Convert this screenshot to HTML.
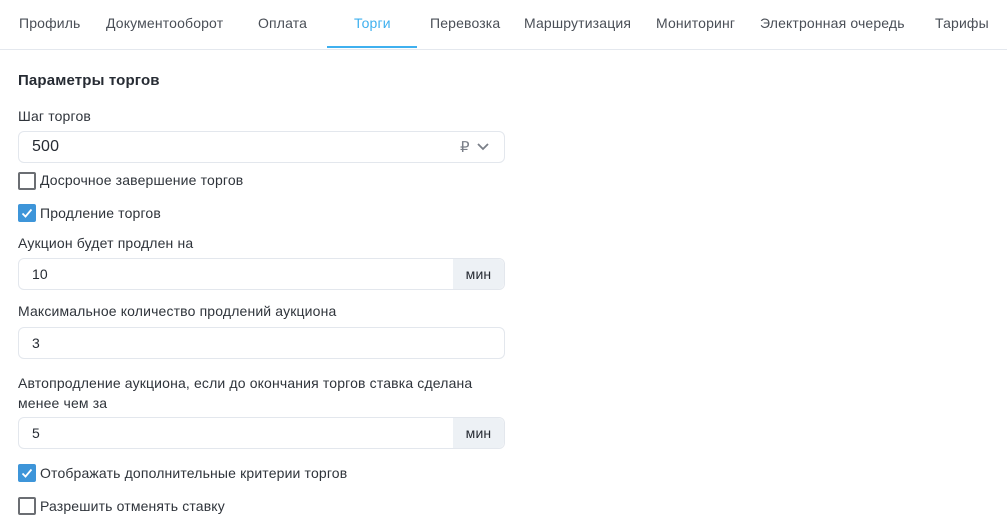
<!DOCTYPE html><html><head><meta charset="utf-8"><style>
body{margin:0;width:1007px;height:532px;background:#fff;font-family:"Liberation Sans",sans-serif;color:#262b33;position:relative;overflow:hidden;letter-spacing:0.15px}
.a{position:absolute;white-space:nowrap}
.tab{position:absolute;top:15px;font-size:14px;color:#4a4f57}
.inp{position:absolute;left:18px;width:485px;height:30px;border:1px solid #e3e7ed;border-radius:6px;font-size:14px}
.inp span{position:absolute;left:13px;top:7px}
.suf{position:absolute;right:0;top:0;width:51px;height:30px;background:#edf1f5;border-radius:0 6px 6px 0;font-size:14px;text-align:center;line-height:30px}
.lab{position:absolute;left:18px;font-size:14px;color:#2f343b;white-space:nowrap}
.cb{position:absolute;left:18px;width:14px;height:14px;border:2px solid #6b6e73;border-radius:2px}
.cb.on{background:#3d95d9;border-color:#3d95d9}
</style></head><body>
<div style="position:absolute;left:0;top:0;width:1007px;height:49px;border-bottom:1px solid #e4e8ee"></div>
<div class="tab" style="left:19px">Профиль</div>
<div class="tab" style="left:106px">Документооборот</div>
<div class="tab" style="left:258px">Оплата</div>
<div class="tab" style="left:354px;color:#3fb0ef">Торги</div>
<div style="position:absolute;left:327px;top:46px;width:90px;height:2px;background:#3fb0ef"></div>
<div class="tab" style="left:430px">Перевозка</div>
<div class="tab" style="left:524px">Маршрутизация</div>
<div class="tab" style="left:656px">Мониторинг</div>
<div class="tab" style="left:760px">Электронная очередь</div>
<div class="tab" style="left:935px">Тарифы</div>
<div class="a" style="left:18px;top:72px;font-size:15px;font-weight:bold;color:#262b33">Параметры торгов</div>
<div class="lab" style="top:108px">Шаг торгов</div>
<div class="inp" style="top:131px"><span style="font-size:16px;top:6px">500</span>
<span style="left:441px;top:6px;color:#7a7f88;font-size:15px">₽</span>
<svg style="position:absolute;left:458px;top:10px" width="12" height="10" viewBox="0 0 12 10"><path d="M1 2l5 5 5-5" fill="none" stroke="#7a7f88" stroke-width="1.8"/></svg></div>
<div class="cb" style="top:172px"></div><div class="lab" style="left:40px;top:172px">Досрочное завершение торгов</div>
<div class="cb on" style="top:204px"><svg width="14" height="14" viewBox="0 0 14 14" style="position:absolute;left:0;top:0"><path d="M2.5 7.5l3 3 6-7" fill="none" stroke="#fff" stroke-width="1.8"/></svg></div><div class="lab" style="left:40px;top:205px">Продление торгов</div>
<div class="lab" style="top:235px">Аукцион будет продлен на</div>
<div class="inp" style="top:258px"><span>10</span><div class="suf">мин</div></div>
<div class="lab" style="top:303px">Максимальное количество продлений аукциона</div>
<div class="inp" style="top:327px"><span>3</span></div>
<div class="lab" style="top:373px;line-height:20px">Автопродление аукциона, если до окончания торгов ставка сделана<br>менее чем за</div>
<div class="inp" style="top:417px"><span>5</span><div class="suf">мин</div></div>
<div class="cb on" style="top:464px"><svg width="14" height="14" viewBox="0 0 14 14" style="position:absolute;left:0;top:0"><path d="M2.5 7.5l3 3 6-7" fill="none" stroke="#fff" stroke-width="1.8"/></svg></div><div class="lab" style="left:40px;top:465px">Отображать дополнительные критерии торгов</div>
<div class="cb" style="top:497px"></div><div class="lab" style="left:40px;top:498px">Разрешить отменять ставку</div>
</body></html>
